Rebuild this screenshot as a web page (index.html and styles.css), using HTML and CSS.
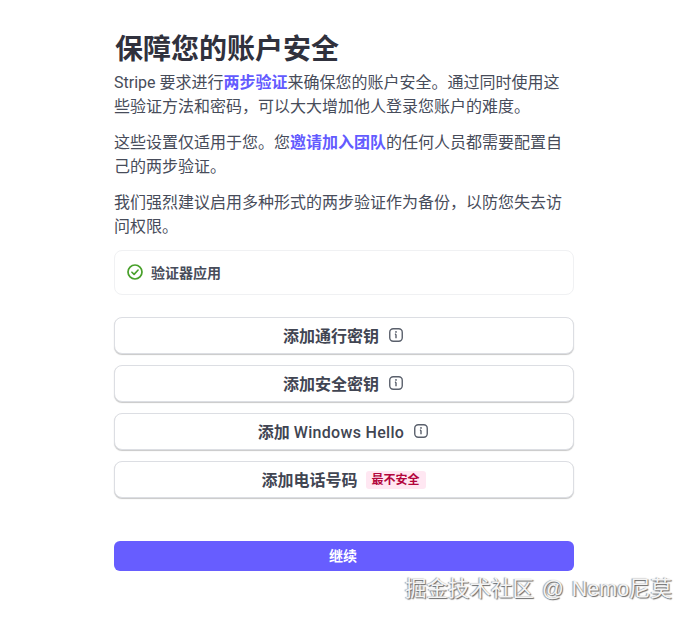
FILE: index.html
```html
<!DOCTYPE html>
<html lang="zh-CN">
<head>
    <meta charset="UTF-8">
    <meta name="viewport" content="width=device-width, initial-scale=1.0">
    <title>保障您的账户安全</title>
    <link rel="stylesheet" href="styles.css">
</head>
<body>

    <div class="container">
        <h1>保障您的账户安全</h1>
        <p>Stripe 要求进行<a href="#">两步验证</a>来确保您的账户安全。通过同时使用这些验证方法和密码，可以大大增加他人登录您账户的难度。</p>
        <p>这些设置仅适用于您。您<a href="#">邀请加入团队</a>的任何人员都需要配置自己的两步验证。</p>
        <p>我们强烈建议启用多种形式的两步验证作为备份，以防您失去访问权限。</p>

        <!-- 已启用的方式 -->
        <div class="card">
            <svg class="check" width="16" height="16" viewBox="0 0 16 16" fill="none" stroke="#48a02a">
                <circle cx="8" cy="8" r="7" stroke-width="1.7"/>
                <path d="M4.9 8.2l2.2 2.2 4-4.4" stroke-width="1.6" stroke-linecap="round" stroke-linejoin="round"/>
            </svg>
            <span>验证器应用</span>
        </div>

        <!-- 可添加的方式 -->
        <div class="options">
            <button class="option"><span>添加通行密钥</span>
                <svg class="info" width="14" height="14" viewBox="0 0 14 14" fill="none" stroke="#5a606c">
                    <rect x="0.75" y="0.75" width="12.5" height="12.5" rx="3.5" stroke-width="1.4"/>
                    <path d="M7 6.3v4M5.9 6.3H7" stroke-width="1.4"/>
                    <circle cx="7" cy="3.9" r="0.9" fill="#5a606c" stroke="none"/>
                </svg>
            </button>
            <button class="option"><span>添加安全密钥</span>
                <svg class="info" width="14" height="14" viewBox="0 0 14 14" fill="none" stroke="#5a606c">
                    <rect x="0.75" y="0.75" width="12.5" height="12.5" rx="3.5" stroke-width="1.4"/>
                    <path d="M7 6.3v4M5.9 6.3H7" stroke-width="1.4"/>
                    <circle cx="7" cy="3.9" r="0.9" fill="#5a606c" stroke="none"/>
                </svg>
            </button>
            <button class="option"><span>添加 <span class="latin">Windows Hello</span></span>
                <svg class="info" width="14" height="14" viewBox="0 0 14 14" fill="none" stroke="#5a606c">
                    <rect x="0.75" y="0.75" width="12.5" height="12.5" rx="3.5" stroke-width="1.4"/>
                    <path d="M7 6.3v4M5.9 6.3H7" stroke-width="1.4"/>
                    <circle cx="7" cy="3.9" r="0.9" fill="#5a606c" stroke="none"/>
                </svg>
            </button>
            <button class="option"><span>添加电话号码</span> <span class="badge">最不安全</span></button>
        </div>

        <button class="continue">继续</button>
    </div>

    <div class="watermark">掘金技术社区 @ Nemo尼莫</div>

</body>
</html>
```

FILE: styles.css
```css
body {
    font-family: Roboto, "Noto Sans CJK SC", sans-serif;
    margin: 0;
    height: 620px;
    background-color: #fff;
    color: #474c5a;
    overflow: hidden;
}
.container {
    width: 460px;
    margin-left: 114px;
    padding-top: 29px;
}
h1 {
    margin: 0;
    padding-left: 1px;
    font-size: 28px;
    line-height: 42px;
    font-weight: 700;
    color: #30313d;
}
p {
    margin: 0 0 12px;
    font-size: 16px;
    line-height: 24px;
}
a {
    color: #635bff;
    font-weight: 700;
    text-decoration: none;
}
.card {
    display: flex;
    align-items: center;
    gap: 8px;
    height: 45px;
    box-sizing: border-box;
    margin-top: -1px;
    padding: 0 0 2px 12px;
    border: 1px solid #f0f1f3;
    border-radius: 8px;
    font-size: 14px;
    font-weight: 700;
}
.options {
    display: flex;
    flex-direction: column;
    gap: 11px;
    margin-top: 22px;
}
.option {
    display: flex;
    align-items: center;
    justify-content: center;
    gap: 10px;
    height: 37px;
    padding: 0 2px 2px 0;
    border: 1px solid #dcdee3;
    border-radius: 8px;
    background-color: #fff;
    box-shadow: 0 1px 1px rgba(0, 0, 0, 0.22);
    color: #414552;
    font-family: inherit;
    font-size: 16px;
    font-weight: 700;
}
.latin {
    font-weight: 500;
    letter-spacing: 0.3px;
}
.badge {
    margin: 2px -1px 0 -2px;
    padding: 1px 6px;
    border-radius: 3px;
    background-color: #ffe7f2;
    color: #b3063d;
    font-size: 12px;
    line-height: 16px;
    font-weight: 700;
}
.continue {
    display: block;
    width: 100%;
    height: 30px;
    margin-top: 43px;
    padding: 0 2px 2px 0;
    border: none;
    border-radius: 6px;
    background-color: #675dff;
    color: #fff;
    font-family: inherit;
    font-size: 14px;
    font-weight: 700;
}
.watermark {
    position: absolute;
    left: 405px;
    top: 574px;
    font-family: "Liberation Sans", "Noto Sans CJK SC", sans-serif;
    font-size: 21.5px;
    line-height: 30px;
    word-spacing: 2px;
    white-space: nowrap;
    color: #f4f4f4;
    text-shadow: 1px 1px 1px #666, -1px 0 1px #999;
}
```
